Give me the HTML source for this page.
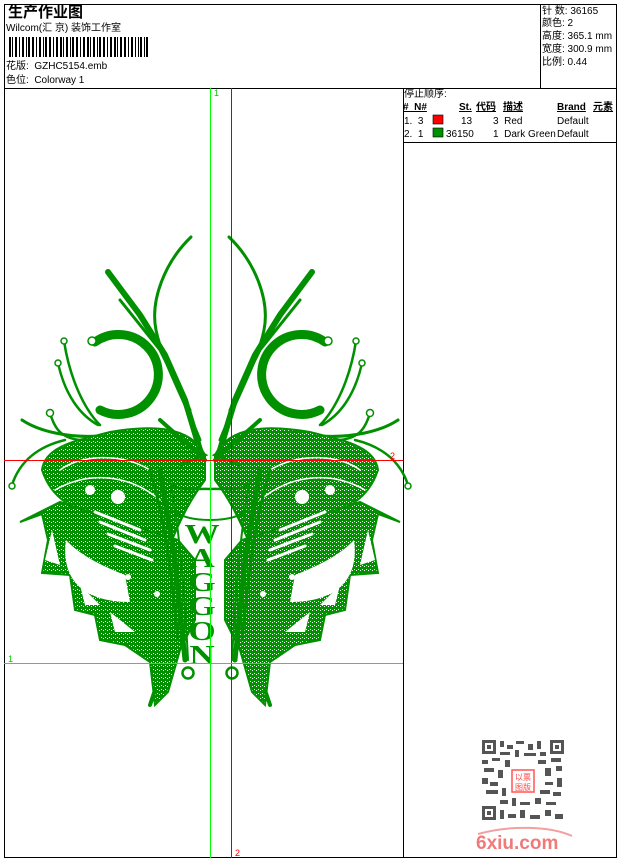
<!DOCTYPE html>
<html><head><meta charset="utf-8">
<style>
html,body{margin:0;padding:0;background:#fff;}
body{width:620px;height:860px;position:relative;overflow:hidden;font-family:"Liberation Sans","Noto Sans CJK SC",sans-serif;color:#000;}
.a{position:absolute;white-space:nowrap;}
.t{font-size:10px;line-height:12px;}
</style></head><body>
<svg width="620" height="860" style="position:absolute;left:0;top:0" xmlns="http://www.w3.org/2000/svg">
<rect x="4.5" y="4.5" width="612" height="853" fill="none" stroke="#000" stroke-width="1"/>
<line x1="4" y1="88.5" x2="617" y2="88.5" stroke="#000"/>
<line x1="540.5" y1="4" x2="540.5" y2="88" stroke="#000"/>
<line x1="403.5" y1="88" x2="403.5" y2="858" stroke="#000"/>
<line x1="403" y1="142.5" x2="617" y2="142.5" stroke="#000"/>
<g fill="#000">
<rect x="9" y="37" width="2" height="20"/><rect x="12" y="37" width="1" height="20"/><rect x="15" y="37" width="2" height="20"/><rect x="19" y="37" width="1" height="20"/><rect x="22" y="37" width="2" height="20"/><rect x="26" y="37" width="1" height="20"/><rect x="28" y="37" width="2" height="20"/><rect x="32" y="37" width="2" height="20"/><rect x="36" y="37" width="1" height="20"/><rect x="39" y="37" width="2" height="20"/><rect x="43" y="37" width="1" height="20"/><rect x="45" y="37" width="2" height="20"/><rect x="49" y="37" width="2" height="20"/><rect x="53" y="37" width="1" height="20"/><rect x="56" y="37" width="2" height="20"/><rect x="60" y="37" width="2" height="20"/><rect x="63" y="37" width="1" height="20"/><rect x="66" y="37" width="2" height="20"/><rect x="70" y="37" width="1" height="20"/><rect x="72" y="37" width="2" height="20"/><rect x="76" y="37" width="2" height="20"/><rect x="80" y="37" width="1" height="20"/><rect x="83" y="37" width="2" height="20"/><rect x="87" y="37" width="2" height="20"/><rect x="90" y="37" width="1" height="20"/><rect x="93" y="37" width="2" height="20"/><rect x="97" y="37" width="1" height="20"/><rect x="99" y="37" width="2" height="20"/><rect x="103" y="37" width="2" height="20"/><rect x="107" y="37" width="1" height="20"/><rect x="110" y="37" width="2" height="20"/><rect x="114" y="37" width="2" height="20"/><rect x="117" y="37" width="1" height="20"/><rect x="120" y="37" width="2" height="20"/><rect x="124" y="37" width="2" height="20"/><rect x="128" y="37" width="1" height="20"/><rect x="131" y="37" width="2" height="20"/><rect x="135" y="37" width="1" height="20"/><rect x="138" y="37" width="1" height="20"/><rect x="140" y="37" width="2" height="20"/><rect x="144" y="37" width="1" height="20"/><rect x="146" y="37" width="2" height="20"/>
</g>
<rect x="433" y="115" width="10" height="9" fill="#ff0000" stroke="#000" stroke-width="0.6"/>
<rect x="433" y="128" width="10" height="9" fill="#009000" stroke="#000" stroke-width="0.6"/>
<defs>
<pattern id="tex" width="4" height="4" patternUnits="userSpaceOnUse">
<rect width="4" height="4" fill="#009000"/><rect x="1" y="1" width="1" height="1" fill="#fff"/><rect x="3" y="2" width="1" height="1" fill="#fff"/>
</pattern>
<g id="half" fill="none" stroke="#009000" stroke-linecap="round">
  <path d="M191,237 C165,262 150,300 156,330 C162,360 182,395 200,440" stroke-width="3"/>
  <path d="M108,272 L140,315 L165,355 L185,400 L200,450" stroke-width="6"/>
  <path d="M120,300 L160,350 L190,410" stroke-width="3"/>
  <path d="M95,342 A40,40 0 1,1 100,410" stroke-width="9"/>
  <path d="M64,341 C70,380 85,410 100,425" stroke-width="2.5"/>
  <path d="M58,363 C65,395 80,415 98,425" stroke-width="2.5"/>
  <path d="M50,413 C55,430 62,438 80,440" stroke-width="2.5"/>
  <path d="M22,420 C40,432 70,438 100,436" stroke-width="3"/>
  <path d="M12,485 C20,460 40,446 65,440" stroke-width="2.5"/>
  <circle cx="64" cy="341" r="3" fill="#fff" stroke-width="1.5"/>
  <circle cx="58" cy="363" r="3" fill="#fff" stroke-width="1.5"/>
  <circle cx="50" cy="413" r="3.5" fill="#fff" stroke-width="1.5"/>
  <circle cx="12" cy="486" r="3" fill="#fff" stroke-width="1.5"/>
  <circle cx="92" cy="341" r="4" fill="#fff" stroke-width="1.5"/>
  <path d="M42,470 C45,445 80,440 110,432 C150,425 190,425 205,455 L205,480 C190,500 180,520 170,545 L120,525 C90,512 55,510 42,470Z" fill="url(#tex)" stroke-width="2"/>
  <path d="M20,522 L42,514 L48,540 L42,573 L70,575 L75,610 L95,615 L100,640 L125,645 L150,662 L155,705 L168,692 L180,650 L195,620 L195,560 L178,540 L120,522 L60,502 Z" fill="url(#tex)" stroke-width="2"/>
  <path d="M66,540 C60,585 90,602 130,602 L125,575 C100,565 80,555 66,540Z" fill="#fff" stroke="none"/>
  <path d="M52,530 L45,560 L60,565 Z" fill="#fff" stroke="none"/>
  <path d="M80,585 L85,605 L100,605 Z M110,612 L115,632 L135,632 Z" fill="#fff" stroke="none"/>
  <circle cx="118" cy="497" r="7" fill="#fff" stroke="none"/>
  <circle cx="90" cy="490" r="5" fill="#fff" stroke="none"/>
  <path d="M95,512 L140,530 M100,522 L145,540 M108,534 L150,550 M115,546 L152,560" stroke="#fff" stroke-width="3"/>
  <path d="M60,470 C80,455 120,452 150,470 M55,490 C90,470 130,475 160,500" stroke="#fff" stroke-width="1.5"/>
  <circle cx="128" cy="577" r="3" fill="#fff" stroke="none"/>
  <circle cx="157" cy="594" r="3" fill="#fff" stroke="none"/>
  <path d="M160,470 L175,560 L185,660" stroke-width="5"/>
  <path d="M150,470 C165,520 170,560 178,640" stroke-width="3"/>
  <path d="M170,480 C180,530 185,600 188,660" stroke-width="2"/>
  <path d="M172,485 C185,492 198,488 210,489" stroke-width="2.5"/>
  <path d="M172,510 C182,518 198,520 210,520" stroke-width="2"/>
  <path d="M160,420 L205,460" stroke-width="4"/>
  <path d="M180,440 L205,455 L180,465" stroke-width="3"/>
  <path d="M155,690 L150,705" stroke-width="4"/>
  <circle cx="188" cy="673" r="5.5" fill="#fff" stroke-width="2.5"/>
</g>
</defs>
<use href="#half"/>
<use href="#half" transform="translate(420,0) scale(-1,1)"/>
<g font-family="Liberation Serif,serif" font-weight="bold" font-size="27" fill="#009000" text-anchor="middle" transform="translate(202,0) scale(1.3,1) translate(-202,0)">
<text x="202" y="543">W</text>
<text x="202" y="567">A</text>
<text x="202" y="591">G</text>
<text x="202" y="615">G</text>
<text x="202" y="640">O</text>
<text x="202" y="664">N</text>
</g>
<line x1="210.5" y1="88" x2="210.5" y2="858" stroke="#00ff00" stroke-width="1"/>
<line x1="231.5" y1="88" x2="231.5" y2="858" stroke="#d00000" stroke-width="1"/>
<line x1="4" y1="663.5" x2="403" y2="663.5" stroke="#00ff00" stroke-width="1"/>
<line x1="4" y1="460.5" x2="403" y2="460.5" stroke="#ff0000" stroke-width="1"/>
<text x="214" y="96" font-size="9" fill="#00cc00" font-family="Liberation Sans">1</text>
<text x="235" y="856" font-size="9" fill="#ff0000" font-family="Liberation Sans">2</text>
<text x="8" y="662" font-size="9" fill="#00cc00" font-family="Liberation Sans">1</text>
<text x="390" y="459" font-size="9" fill="#ff0000" font-family="Liberation Sans">2</text>
<g fill="#555">
<rect x="481" y="739" width="84" height="82" fill="#fff"/>
<rect x="482" y="740" width="14" height="14"/><rect x="485" y="743" width="8" height="8" fill="#fff"/><rect x="487" y="745" width="4" height="4"/>
<rect x="550" y="740" width="14" height="14"/><rect x="553" y="743" width="8" height="8" fill="#fff"/><rect x="555" y="745" width="4" height="4"/>
<rect x="482" y="806" width="14" height="14"/><rect x="485" y="809" width="8" height="8" fill="#fff"/><rect x="487" y="811" width="4" height="4"/>
<rect x="500" y="741" width="4" height="6"/><rect x="507" y="745" width="6" height="4"/><rect x="516" y="741" width="8" height="3"/><rect x="528" y="744" width="5" height="6"/><rect x="537" y="741" width="4" height="8"/>
<rect x="500" y="752" width="10" height="3"/><rect x="515" y="750" width="4" height="7"/><rect x="524" y="753" width="12" height="3"/><rect x="540" y="752" width="6" height="4"/>
<rect x="482" y="760" width="6" height="4"/><rect x="492" y="758" width="8" height="3"/><rect x="505" y="760" width="5" height="7"/><rect x="538" y="760" width="8" height="4"/><rect x="551" y="758" width="10" height="4"/>
<rect x="484" y="768" width="10" height="4"/><rect x="498" y="770" width="5" height="8"/><rect x="545" y="768" width="6" height="8"/><rect x="556" y="766" width="6" height="5"/>
<rect x="482" y="778" width="6" height="6"/><rect x="490" y="782" width="8" height="4"/><rect x="545" y="782" width="8" height="3"/><rect x="557" y="778" width="5" height="9"/>
<rect x="486" y="790" width="12" height="4"/><rect x="502" y="788" width="4" height="8"/><rect x="540" y="790" width="10" height="4"/><rect x="553" y="792" width="8" height="4"/>
<rect x="500" y="800" width="8" height="4"/><rect x="512" y="798" width="4" height="8"/><rect x="520" y="802" width="10" height="3"/><rect x="535" y="798" width="6" height="6"/><rect x="546" y="802" width="10" height="3"/>
<rect x="500" y="810" width="4" height="9"/><rect x="508" y="814" width="8" height="4"/><rect x="520" y="810" width="5" height="8"/><rect x="530" y="815" width="10" height="4"/><rect x="545" y="810" width="6" height="6"/><rect x="555" y="814" width="8" height="5"/>
</g>
<rect x="512" y="770" width="22" height="22" fill="#fff" stroke="#f55" stroke-width="1.5"/>
<text x="523" y="780" font-size="8" fill="#f44" text-anchor="middle" font-family="Noto Sans CJK SC,sans-serif">以票</text>
<text x="523" y="790" font-size="8" fill="#f44" text-anchor="middle" font-family="Noto Sans CJK SC,sans-serif">图版</text>
<path d="M478,834 C510,825 550,826 572,836" stroke="#f3a0a0" stroke-width="2" fill="none"/>
<text x="476" y="849" font-size="19" font-weight="bold" fill="#f07a7a" font-family="Liberation Sans,sans-serif">6xiu.com</text>
</svg>
<div class="a" style="left:8px;top:3px;font-size:15px;font-weight:bold;line-height:18px;font-family:'Noto Sans CJK SC',sans-serif">生产作业图</div>
<div class="a t" style="left:6px;top:23px">Wilcom(汇 京) 装饰工作室</div>
<div class="a t" style="left:6px;top:61px">花版:&nbsp; GZHC5154.emb</div>
<div class="a t" style="left:6px;top:75px">色位:&nbsp; Colorway 1</div>
<div class="a t" style="left:542px;top:6px">针 数: 36165</div>
<div class="a t" style="left:542px;top:18px">颜色: 2</div>
<div class="a t" style="left:542px;top:31px">高度: 365.1 mm</div>
<div class="a t" style="left:542px;top:44px">宽度: 300.9 mm</div>
<div class="a t" style="left:542px;top:57px">比例: 0.44</div>
<div class="a t" style="left:404px;top:89px">停止顺序:</div>
<div class="a t" style="left:403px;top:102px;font-weight:bold;text-decoration:underline">#&nbsp; N#</div>
<div class="a t" style="left:459px;top:102px;font-weight:bold;text-decoration:underline">St.</div>
<div class="a t" style="left:476px;top:102px;font-weight:bold;text-decoration:underline">代码</div>
<div class="a t" style="left:503px;top:102px;font-weight:bold;text-decoration:underline">描述</div>
<div class="a t" style="left:557px;top:102px;font-weight:bold;text-decoration:underline">Brand</div>
<div class="a t" style="left:593px;top:102px;font-weight:bold;text-decoration:underline">元素</div>
<div class="a t" style="left:404px;top:116px">1.&nbsp; 3</div>
<div class="a t" style="left:461px;top:116px">13</div>
<div class="a t" style="left:493px;top:116px">3&nbsp; Red</div>
<div class="a t" style="left:557px;top:116px">Default</div>
<div class="a t" style="left:404px;top:129px">2.&nbsp; 1</div>
<div class="a t" style="left:446px;top:129px">36150</div>
<div class="a t" style="left:493px;top:129px">1&nbsp; Dark Green</div>
<div class="a t" style="left:557px;top:129px">Default</div>
</body></html>
